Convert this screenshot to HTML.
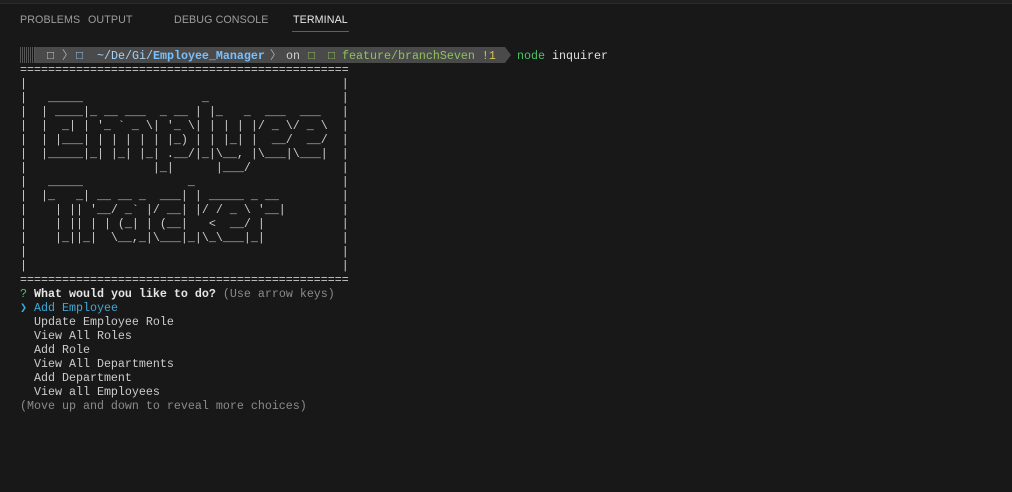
<!DOCTYPE html>
<html><head><meta charset="utf-8"><style>
html,body{margin:0;padding:0;background:#181818;width:1012px;height:492px;overflow:hidden;position:relative}
.topline{position:absolute;left:0;top:0;width:1012px;height:3px;background:#202020;border-bottom:1px solid #2b2b2b}
.tab{position:absolute;top:14px;font:10.7px "Liberation Sans",sans-serif;color:#9d9d9d;letter-spacing:0.1px}
.tab.a{color:#e7e7e7}
.ul{position:absolute;left:292px;top:31px;width:57px;height:1px;background:#0078d4}
pre{position:absolute;left:20px;top:49px;margin:0;font:11.67px/14px "Liberation Mono",monospace;color:#cccccc;white-space:pre}
.bar{position:absolute;left:35px;top:47px;width:470px;height:16px;background:#4a4a4a}
.tip{position:absolute;left:505px;top:47px;width:0;height:0;border-top:8px solid transparent;border-bottom:8px solid transparent;border-left:6px solid #4a4a4a}
.dith{position:absolute;left:20px;top:47px;width:15px;height:16px;background:repeating-linear-gradient(90deg,#555 0 1px,#181818 1px 2px)}
.p{position:absolute;top:49px;font:11.67px/14px "Liberation Mono",monospace;white-space:pre}
b{font-weight:bold}
</style></head><body>
<div class="topline"></div>
<div class="tab" style="left:20px">PROBLEMS</div>
<div class="tab" style="left:88px">OUTPUT</div>
<div class="tab" style="left:174px">DEBUG CONSOLE</div>
<div class="tab a" style="left:293px">TERMINAL</div>
<div class="ul"></div>
<div class="dith"></div><div class="bar"></div><div class="tip"></div>
<div class="p" style="left:47px;color:#d0d0d0">□</div>
<div class="p" style="left:62px;color:#aaaaaa">〉</div>
<div class="p" style="left:76px;color:#9ec7ef">□</div>
<div class="p" style="left:97px;color:#a6d2f5">~/De/Gi/<b style="color:#79c0ff">Employee_Manager</b></div>
<div class="p" style="left:270px;color:#aaaaaa">〉</div>
<div class="p" style="left:286px;color:#d0d0d0">on</div>
<div class="p" style="left:308px;color:#8fc160">□</div>
<div class="p" style="left:328px;color:#8fc160">□ feature/branchSeven <span style="color:#d6c15a">!1</span></div>
<div class="p" style="left:517px;color:#4ec26a">node <span style="color:#e0e0e0">inquirer</span></div>
<pre>

===============================================
|                                             |
|   _____                 _                   |
|  | ____|_ __ ___  _ __ | |_   _  ___  ___   |
|  |  _| | '_ ` _ \| '_ \| | | | |/ _ \/ _ \  |
|  | |___| | | | | | |_) | | |_| |  __/  __/  |
|  |_____|_| |_| |_| .__/|_|\__, |\___|\___|  |
|                  |_|      |___/             |
|   _____               _                     |
|  |_   _| __ __ _  ___| | _____ _ __         |
|    | || '__/ _` |/ __| |/ / _ \ '__|        |
|    | || | | (_| | (__|   <  __/ |           |
|    |_||_|  \__,_|\___|_|\_\___|_|           |
|                                             |
|                                             |
===============================================
<span style="color:#4ec26a">?</span> <b style="color:#e6e6e6">What would you like to do?</b> <span style="color:#8a8a8a">(Use arrow keys)</span>
<span style="color:#3ea8d8">❯ Add Employee</span>
  Update Employee Role
  View All Roles
  Add Role
  View All Departments
  Add Department
  View all Employees
<span style="color:#8a8a8a">(Move up and down to reveal more choices)</span></pre>
</body></html>
